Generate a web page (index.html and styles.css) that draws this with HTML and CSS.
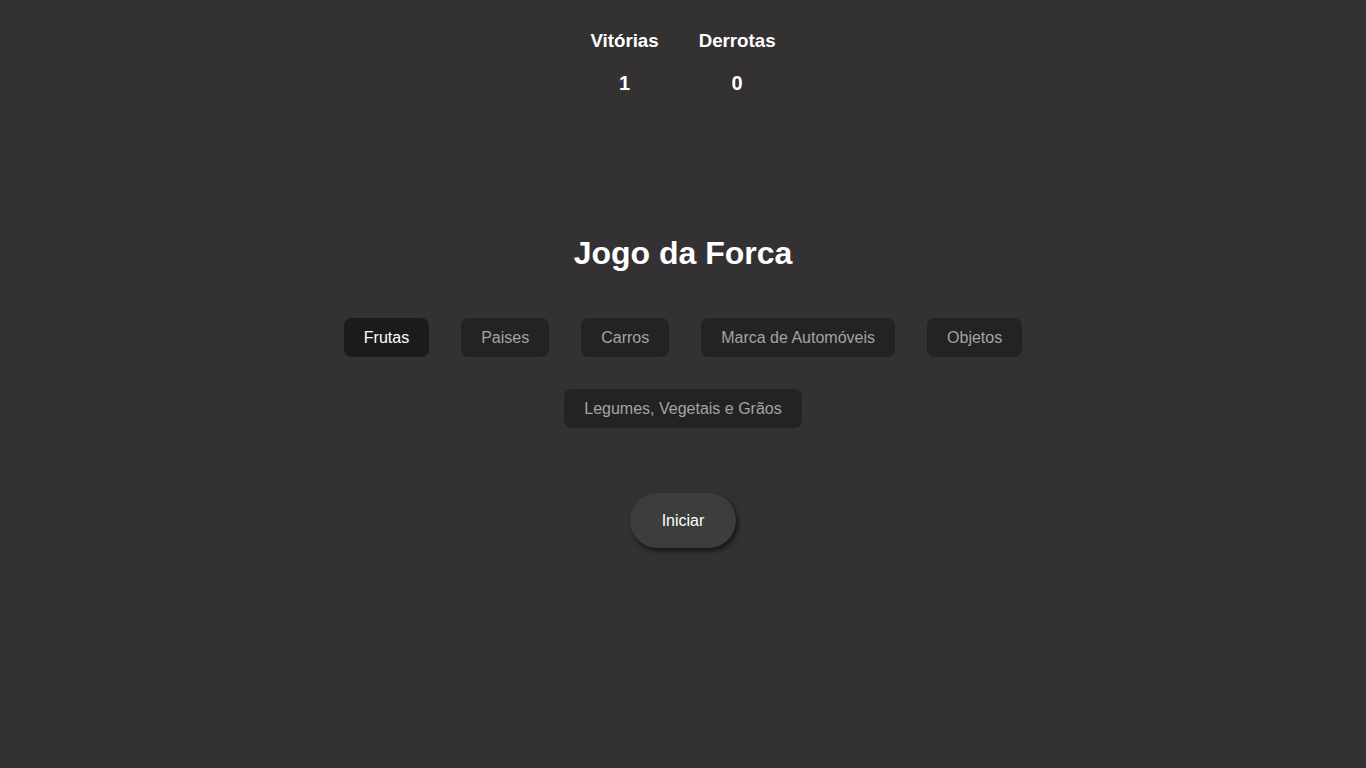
FILE: index.html
```html
<!DOCTYPE html>
<html lang="pt-BR">
<head>
<meta charset="utf-8">
<title>Jogo da Forca</title>
<link rel="stylesheet" href="styles.css">
</head>
<body>
  <div class="placar">
    <div class="coluna">
      <span class="rotulo">Vitórias</span>
      <span class="valor">1</span>
    </div>
    <div class="coluna">
      <span class="rotulo">Derrotas</span>
      <span class="valor">0</span>
    </div>
  </div>

  <h1 class="titulo">Jogo da Forca</h1>

  <div class="categorias">
    <button class="cat ativa">Frutas</button>
    <button class="cat">Paises</button>
    <button class="cat">Carros</button>
    <button class="cat">Marca de Automóveis</button>
    <button class="cat">Objetos</button>
    <button class="cat">Legumes, Vegetais e Grãos</button>
  </div>

  <div class="acoes">
    <button class="iniciar">Iniciar</button>
  </div>
</body>
</html>
```

FILE: styles.css
```css
html, body {
  margin: 0;
  padding: 0;
}

body {
  background: #333132;
  color: #ffffff;
  font-family: "Liberation Sans", Arial, sans-serif;
  min-height: 100vh;
}

.placar {
  display: flex;
  justify-content: center;
  gap: 40px;
  padding-top: 30px;
}

.coluna {
  display: flex;
  flex-direction: column;
  align-items: center;
  gap: 20px;
  font-weight: bold;
}

.rotulo {
  font-size: 18.72px;
  line-height: 22px;
}

.valor {
  font-size: 20px;
  line-height: 23px;
}

.titulo {
  margin: 140px 0 0;
  font-size: 32px;
  font-weight: bold;
  text-align: center;
  line-height: normal;
}

.categorias {
  max-width: 820px;
  margin: 30px auto 0;
  display: flex;
  flex-wrap: wrap;
  justify-content: center;
}

.cat {
  margin: 16px;
  padding: 10px 20px;
  font-family: "Liberation Sans", Arial, sans-serif;
  font-size: 16px;
  line-height: 19px;
  background: #232323;
  color: #a4a4a4;
  border: none;
  border-radius: 8px;
}

.cat.ativa {
  background: #1b1b1b;
  color: #ffffff;
}

.acoes {
  display: flex;
  justify-content: center;
  margin-top: 49px;
}

.iniciar {
  padding: 18px 32px;
  font-family: "Liberation Sans", Arial, sans-serif;
  font-size: 16px;
  line-height: 19px;
  background: #3d3d3d;
  color: #ffffff;
  border: none;
  border-radius: 28px;
  box-shadow: 2px 3px 5px rgba(0, 0, 0, 0.6);
}
```
